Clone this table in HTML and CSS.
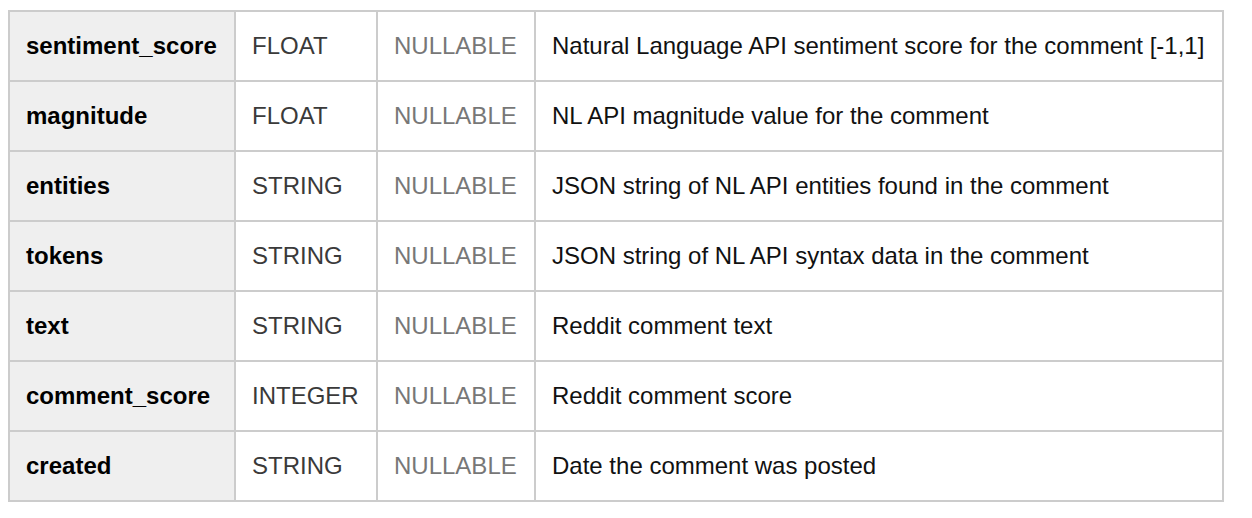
FILE: index.html
```html
<!DOCTYPE html>
<html>
<head>
<meta charset="utf-8">
<link rel="stylesheet" href="styles.css">
</head>
<body>
<div class="schema">
  <div class="cell name">sentiment_score</div>
  <div class="cell type">FLOAT</div>
  <div class="cell mode">NULLABLE</div>
  <div class="cell desc">Natural Language API sentiment score for the comment [-1,1]</div>

  <div class="cell name">magnitude</div>
  <div class="cell type">FLOAT</div>
  <div class="cell mode">NULLABLE</div>
  <div class="cell desc">NL API magnitude value for the comment</div>

  <div class="cell name">entities</div>
  <div class="cell type">STRING</div>
  <div class="cell mode">NULLABLE</div>
  <div class="cell desc">JSON string of NL API entities found in the comment</div>

  <div class="cell name">tokens</div>
  <div class="cell type">STRING</div>
  <div class="cell mode">NULLABLE</div>
  <div class="cell desc">JSON string of NL API syntax data in the comment</div>

  <div class="cell name">text</div>
  <div class="cell type">STRING</div>
  <div class="cell mode">NULLABLE</div>
  <div class="cell desc">Reddit comment text</div>

  <div class="cell name">comment_score</div>
  <div class="cell type">INTEGER</div>
  <div class="cell mode">NULLABLE</div>
  <div class="cell desc">Reddit comment score</div>

  <div class="cell name">created</div>
  <div class="cell type">STRING</div>
  <div class="cell mode">NULLABLE</div>
  <div class="cell desc">Date the comment was posted</div>
</div>
</body>
</html>
```

FILE: styles.css
```css
html, body {
  background: #ffffff;
}
body {
  margin: 10px 8px;
  font-family: "Liberation Sans", Arial, sans-serif;
  font-size: 24px;
}
.schema {
  display: grid;
  grid-template-columns: 226px 142px 158px 688px;
  width: 1216px;
  box-sizing: border-box;
  border-left: 2px solid #cccccc;
  border-top: 2px solid #cccccc;
}
.cell {
  height: 70px;
  box-sizing: border-box;
  border-right: 2px solid #cccccc;
  border-bottom: 2px solid #cccccc;
  display: flex;
  align-items: center;
  padding: 0 0 0 16px;
  white-space: nowrap;
}
.name {
  background: #efefef;
  font-weight: bold;
  color: #000000;
}
.type {
  color: #3a3a3a;
}
.mode {
  color: #777777;
}
.desc {
  color: #111111;
}
```
